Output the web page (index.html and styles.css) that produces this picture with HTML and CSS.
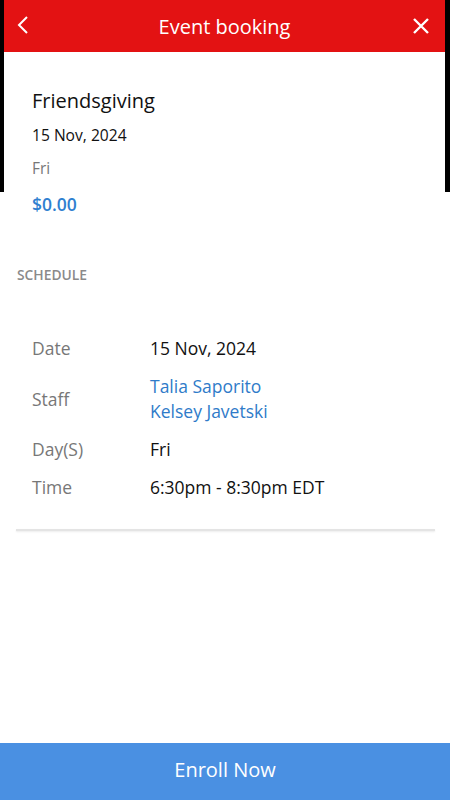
FILE: index.html
```html
<!DOCTYPE html>
<html>
<head>
<meta charset="utf-8">
<link rel="stylesheet" href="styles.css">
</head>
<body>
<div class="page">
  <div class="top">
    <header class="bar">
      <svg class="back" width="12" height="18" viewBox="0 0 12 18"><path d="M10 1 L2 9 L10 17" fill="none" stroke="#fff" stroke-width="2"/></svg>
      <h1 class="title">Event booking</h1>
      <svg class="close" width="18" height="18" viewBox="0 0 18 18"><path d="M2 2 L16 16 M16 2 L2 16" fill="none" stroke="#fff" stroke-width="2.4"/></svg>
    </header>
    <section class="summary">
      <div class="name">Friendsgiving</div>
      <div class="date">15 Nov, 2024</div>
      <div class="day">Fri</div>
    </section>
  </div>
  <div class="price">$0.00</div>
  <div class="section-label">SCHEDULE</div>
  <div class="schedule">
    <div class="row"><div class="label">Date</div><div class="value">15 Nov, 2024</div></div>
    <div class="row"><div class="label">Staff</div><div class="value link">Talia Saporito<br>Kelsey Javetski</div></div>
    <div class="row"><div class="label">Day(S)</div><div class="value">Fri</div></div>
    <div class="row"><div class="label">Time</div><div class="value">6:30pm - 8:30pm EDT</div></div>
  </div>
  <div class="divider"></div>
  <div class="spacer"></div>
  <button class="enroll">Enroll Now</button>
</div>
</body>
</html>
```

FILE: styles.css
```css
* { box-sizing: border-box; }
html, body { margin: 0; padding: 0; background: #fff; }
body { font-family: "Open Sans", "Noto Sans", sans-serif; color: #111; }
.page { width: 450px; height: 800px; display: flex; flex-direction: column; overflow: hidden; }
.top { background: #000; padding: 0 5px 0 4px; height: 192px; display: flex; flex-direction: column; }
.bar { background: #e31213; height: 52px; display: flex; align-items: center; justify-content: space-between; padding: 0 15px 0 13px; }
.back { margin-top: -2px; }
.close { margin-top: 0; }
.title { margin: 0; color: #fff; font-weight: 400; font-size: 20px; line-height: 28px; margin-left: 8px; margin-top: 2px; }
.summary { background: #fff; flex: 1; padding: 35px 0 0 28px; }
.name { font-size: 20px; line-height: 28px; color: #111; }
.date { font-size: 15.6px; line-height: 22px; margin-top: 9px; color: #111; }
.day { font-size: 15.4px; line-height: 22px; margin-top: 12px; color: #777; }
.price { font-size: 17.5px; font-weight: 600; color: #2f7fd0; line-height: 24px; padding-left: 32px; margin-top: 0; }
.section-label { font-size: 13.8px; font-weight: 600; color: #8a8a8a; padding-left: 17px; margin-top: 49px; line-height: 20px; }
.schedule { padding: 51px 0 0 32px; display: flex; flex-direction: column; gap: 13px; }
.row { display: flex; align-items: center; }
.label { width: 118px; font-size: 17.5px; line-height: 25px; color: #777; }
.value { font-size: 17.5px; line-height: 25px; color: #111; }
.link { color: #2f7bc9; }
.divider { margin: 29px 15px 0 16px; height: 2px; background: #e4e4e4; box-shadow: 0 1px 2px rgba(0,0,0,0.08); }
.spacer { flex: 1; }
.enroll { height: 57px; border: 0; background: #4a90e2; color: #fff; font-family: inherit; font-size: 20px; width: 100%; padding: 0 0 4px; }
```
